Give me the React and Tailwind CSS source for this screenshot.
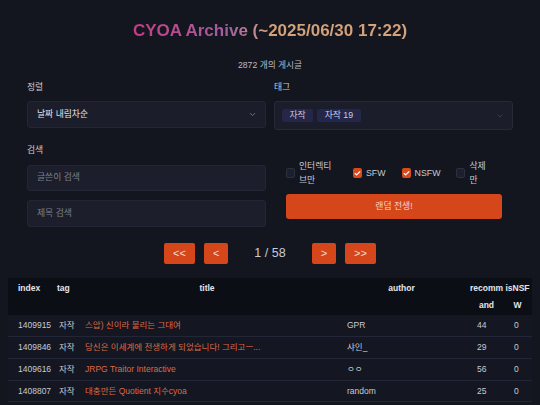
import { ChevronDown, Check } from 'lucide-react';

const rows = [
  { index: '1409915', tag: '자작', title: '스압) 신이라 불리는 그대여', author: 'GPR', rec: 44, nsfw: 0 },
  { index: '1409846', tag: '자작', title: '당신은 이세계에 전생하게 되었습니다! 그리고ㅡ...', author: '샤인_', rec: 29, nsfw: 0 },
  { index: '1409616', tag: '자작', title: 'JRPG Traitor Interactive', author: 'ㅇㅇ', rec: 56, nsfw: 0 },
  { index: '1408807', tag: '자작', title: '대충만든 Quotient 지수cyoa', author: 'random', rec: 25, nsfw: 0 },
];

const CheckBox = ({ checked }) =>
  checked ? (
    <span className="w-[9px] h-[10px] rounded-[2px] bg-[#d84a1c] flex items-center justify-center shrink-0">
      <Check size={7} strokeWidth={4} className="text-white" />
    </span>
  ) : (
    <span className="w-[9px] h-[10px] rounded-[2px] bg-[#1c1f2c] border border-[#2c2f3e] shrink-0" />
  );

const PageButton = ({ children }) => (
  <button className="h-[21px] px-[9px] rounded-[2px] bg-[#d5461b] text-[#f6dcd2] text-[11px] leading-none">
    {children}
  </button>
);

export default function App() {
  return (
    <div className="w-[540px] h-[405px] overflow-hidden bg-[#13151f] text-[#c8cad2] font-['Liberation_Sans','Noto_Sans_CJK_KR',sans-serif]">
      {/* Header */}
      <h1 className="pt-[21px] text-center text-[17px] leading-[20px] font-bold">
        <span className="bg-linear-to-r from-[#c43b84] via-[#a15ea0] via-35% to-[#d4a27a] to-50% bg-clip-text text-transparent">
          CYOA Archive (~2025/06/30 17:22)
        </span>
      </h1>
      <p className="mt-[19px] text-center text-[8.7px] leading-[10px] text-[#b9bcc6]">2872 개의 게시글</p>

      {/* Filters */}
      <div className="mt-[11px] px-[27px] grid grid-cols-2 gap-[8px] text-[8.8px]">
        <div className="flex flex-col">
          <span className="leading-[12px]">정렬</span>
          <div className="mt-[8px] h-[27px] rounded-[3px] bg-[#1b1e2a] border border-[#232634] flex items-center justify-between pl-[9px] pr-[8px]">
            <span className="text-[#e3e4ea]">날짜 내림차순</span>
            <ChevronDown size={9} className="text-[#8a8d99]" />
          </div>
          <span className="mt-[16px] leading-[12px]">검색</span>
          <div className="mt-[9px] h-[26px] rounded-[3px] bg-[#1c1f2b] border border-[#232634] flex items-center pl-[9px] text-[#7d808b]">
            글쓴이 검색
          </div>
          <div className="mt-[9px] h-[27px] rounded-[3px] bg-[#1c1f2b] border border-[#232634] flex items-center pl-[9px] text-[#7d808b]">
            제목 검색
          </div>
        </div>

        <div className="flex flex-col">
          <span className="leading-[12px]">태그</span>
          <div className="mt-[8px] h-[29px] rounded-[3px] bg-[#1b1e2a] border border-[#262a37] flex items-center justify-between pl-[7px] pr-[8px]">
            <div className="flex gap-[4px]">
              <span className="px-[7.5px] h-[13px] flex items-center rounded-[2px] bg-[#24264a] text-[#c9cae2]">자작</span>
              <span className="px-[7.5px] h-[13px] flex items-center rounded-[2px] bg-[#24264a] text-[#c9cae2]">자작 19</span>
            </div>
            <ChevronDown size={8} className="text-[#474a58]" />
          </div>

          <div className="pl-[12px] pr-[11px]">
            <div className="mt-[29px] h-[28px] flex items-center gap-[16px] leading-[14px]">
              <label className="flex items-center gap-[4px]">
                <CheckBox />
                <span className="w-[38px]">인터렉티 브만</span>
              </label>
              <label className="flex items-center gap-[4px]">
                <CheckBox checked />
                <span>SFW</span>
              </label>
              <label className="flex items-center gap-[4px]">
                <CheckBox checked />
                <span>NSFW</span>
              </label>
              <label className="flex items-center gap-[4px]">
                <CheckBox />
                <span className="w-[20px]">삭제 만</span>
              </label>
            </div>
            <button className="mt-[7px] w-full h-[25px] rounded-[3px] bg-[#d5461b] text-[#f6d8cc]">
              랜덤 전생!
            </button>
          </div>
        </div>
      </div>

      {/* Pagination */}
      <div className="mt-[16px] flex items-center justify-center">
        <div className="flex gap-[9px]">
          <PageButton>&lt;&lt;</PageButton>
          <PageButton>&lt;</PageButton>
        </div>
        <span className="mx-[26px] text-[12.5px] text-[#c9cbd3]">1 / 58</span>
        <div className="flex gap-[9px]">
          <PageButton>&gt;</PageButton>
          <PageButton>&gt;&gt;</PageButton>
        </div>
      </div>

      {/* Table */}
      <table className="mt-[14px] mx-[8px] w-[524px] table-fixed text-[8.5px]">
        <colgroup>
          <col className="w-[46px]" />
          <col className="w-[27px]" />
          <col className="w-[252px]" />
          <col className="w-[137px]" />
          <col className="w-[33px]" />
          <col className="w-[29px]" />
        </colgroup>
        <thead className="bg-[#0c0e15] text-[#e4e5eb] font-bold">
          <tr className="leading-[16.5px] align-top">
            <th className="py-[2px] pl-[10px] text-left">index</th>
            <th className="py-[2px] pl-[3px] text-left">tag</th>
            <th className="py-[2px] text-center">title</th>
            <th className="py-[2px] text-center">author</th>
            <th className="py-[2px] text-center">recomm<br />and</th>
            <th className="py-[2px] text-center">isNSF<br />W</th>
          </tr>
        </thead>
        <tbody>
          {rows.map((r) => (
            <tr key={r.index} className="h-[21.7px] border-b border-[#232636] bg-[#141621]">
              <td className="pl-[10px]">{r.index}</td>
              <td className="pl-[5px]">{r.tag}</td>
              <td className="pl-[4px] truncate text-[#de6a43]">{r.title}</td>
              <td className="pl-[14px]">{r.author}</td>
              <td className="pl-[7px]">{r.rec}</td>
              <td className="pl-[11px]">{r.nsfw}</td>
            </tr>
          ))}
        </tbody>
      </table>
    </div>
  );
}
